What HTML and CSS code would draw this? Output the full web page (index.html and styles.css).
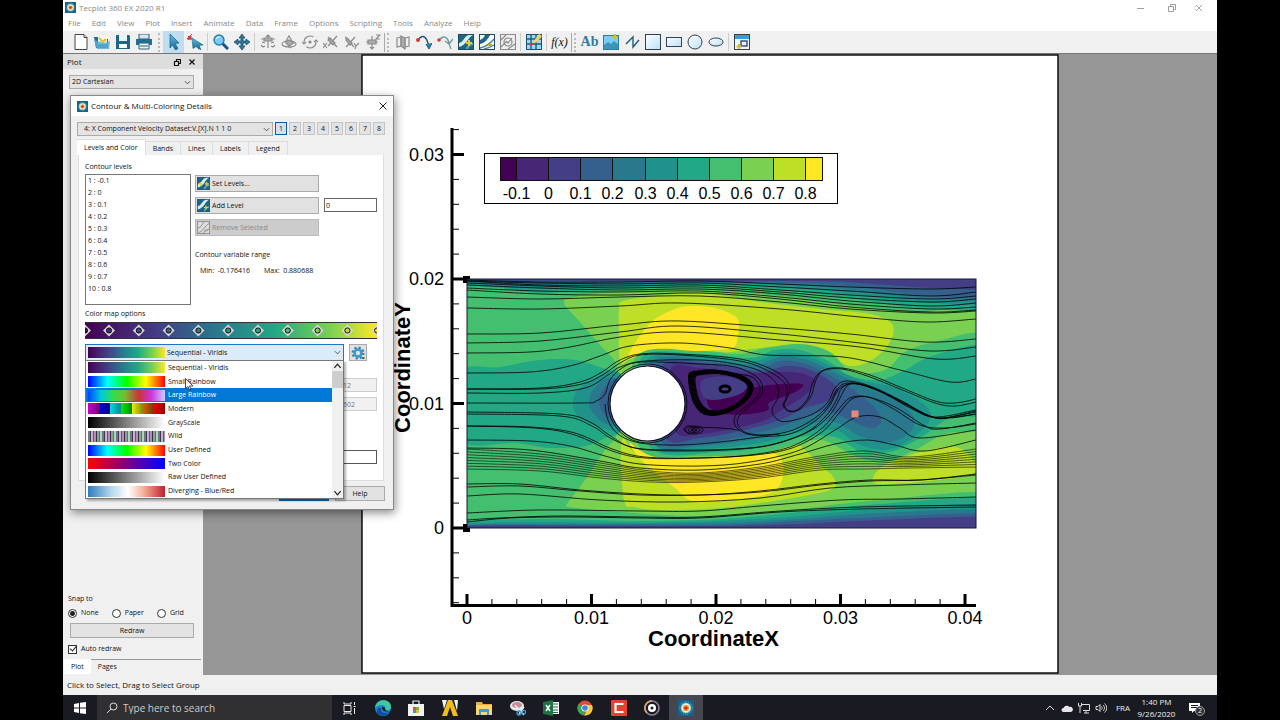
FILE: index.html
```html
<!DOCTYPE html>
<html lang="en">
<head>
<meta charset="utf-8">
<title>Tecplot 360 EX 2020 R1</title>
<link rel="stylesheet" href="styles.css">
</head>
<body>
<svg class="defs" aria-hidden="true">
  <defs>
    <linearGradient id="sky" x1="0" y1="0" x2="1" y2="1"><stop offset="0" stop-color="#fff"/><stop offset="1" stop-color="#b9e0f7"/></linearGradient>
    <linearGradient id="blue" x1="0" y1="0" x2="0" y2="1"><stop offset="0" stop-color="#5cc0ea"/><stop offset="1" stop-color="#17668c"/></linearGradient>
    <symbol id="logo" viewBox="0 0 16 16"><rect width="16" height="16" fill="#17628a"/><circle cx="8" cy="8" r="6.500" fill="none" stroke="#3fb0d6" stroke-dasharray="1 1"/><circle cx="8" cy="8" r="5.400" fill="#7ec8d8"/><circle cx="8" cy="8" r="4.400" fill="#f6efc8"/><circle cx="8" cy="8" r="3" fill="#f08a2c"/><circle cx="8" cy="8" r="1.600" fill="#c42a1c"/></symbol>
    <symbol id="contour" viewBox="0 0 16 16"><rect x=".5" y=".5" width="15" height="15" fill="#1c6684" stroke="#23485c"/><path d="M1 9C6 8 6 2 11 1h4C10 3 9 11 1 13z" fill="#d8eef6"/><path d="M8 15c1-4 4-6 7-6v2c-3 0-4 2-5 4z" fill="#58a9c6"/></symbol>
    <symbol id="contour-light" viewBox="0 0 16 16"><rect x=".5" y=".5" width="15" height="15" fill="#f4fafc" stroke="#23485c"/><path d="M1 6C4 5 5 3 6 1h5C9 5 6 9 1 10z" fill="#1c6684"/><path d="M1 14c5-1 9-3 14-9M5 15c4-1 7-2 10-4" fill="none" stroke="#4a7f96" stroke-width="1.300"/></symbol>
  </defs>
</svg>

<div class="app">
  <header class="titlebar">
    <svg class="logo" viewBox="0 0 16 16"><use href="#logo"/></svg>
    <span class="title">Tecplot 360 EX 2020 R1</span>
    <button class="win" aria-label="Minimize"><svg viewBox="0 0 8 8"><path d="M0 4.500h7"/></svg></button>
    <button class="win" aria-label="Restore"><svg viewBox="0 0 8 8"><path d="M.5 2.500h5v5h-5zM2.500 2.500v-2h5v5h-2"/></svg></button>
    <button class="win" aria-label="Close"><svg viewBox="0 0 8 8"><path d="M1 1l6 6M7 1l-6 6"/></svg></button>
  </header>
  <nav class="menu">
    <button>File</button><button>Edit</button><button>View</button><button>Plot</button><button>Insert</button><button>Animate</button><button>Data</button><button>Frame</button><button>Options</button><button>Scripting</button><button>Tools</button><button>Analyze</button><button>Help</button>
  </nav>
  <div class="toolbar">
    <button aria-label="New"><svg viewBox="0 0 16 16"><path d="M2 .5h9l3 3v12H2z" fill="#fff" stroke="#444"/><path d="M11 .5v3h3" fill="#ddd" stroke="#444"/></svg></button>
    <button aria-label="Open"><svg viewBox="0 0 16 16"><path d="M0 3h6l2 2h6v9H2z" fill="#1c6f94"/><path d="M4 1h9v9H4z" fill="#f6f6ea"/><path d="M5 4l4 4 3-3" stroke="#d7c232" stroke-width="2" fill="none"/><path d="M0 6l3 9h12l1-8-6 2z" fill="#5aaed2" opacity=".85"/></svg></button>
    <button aria-label="Save"><svg viewBox="0 0 16 16"><path d="M1 1h13l1 1v13H1z" fill="#1e6687"/><path d="M4 1h8v6H4z" fill="#e8f4f8"/><path d="M4 10h8v4H4z" fill="#fff"/></svg></button>
    <button aria-label="Print"><svg viewBox="0 0 16 16"><path d="M3 0h10v5H3z" fill="#cfe8f3" stroke="#3b5560"/><path d="M0 5h16v6H0z" fill="#206f93"/><path d="M3 9h10v6H3z" fill="#e9f4f8" stroke="#29627a"/><path d="M4 12h8" stroke="#29627a"/></svg></button>
    <i class="grip"></i>
    <button class="on" aria-label="Select"><svg viewBox="0 0 16 16"><path d="M4 0l9 9-4 .5 3 5-2.500 1.500-3-5L4 14z" fill="url(#blue)" stroke="#15607e" stroke-width=".7"/></svg></button>
    <button aria-label="Adjust"><svg viewBox="0 0 16 16"><path d="M5 4l11 7-4 .5 2 4-3-1-2-2-3 2z" fill="url(#blue)" stroke="#15607e" stroke-width=".6"/><path d="M0 5h5M5 0L0 5" stroke="#b24646" fill="none"/><path d="M1 2h3.500v3.500H1z" fill="#d73a3a"/></svg></button>
    <i class="sep"></i>
    <button aria-label="Zoom"><svg viewBox="0 0 16 16"><path d="M9 9l6 6" stroke="#1c4f86" stroke-width="3"/><circle cx="6" cy="6" r="5" fill="#79cdf4" stroke="#2b7cae" stroke-width="1.400"/><path d="M3 5c1-2 3-2 4-2" stroke="#fff" fill="none"/></svg></button>
    <button aria-label="Translate"><svg viewBox="0 0 16 16"><path d="M8 0l3 4H9v3h3V5l4 3-4 3V9H9v3h2l-3 4-3-4h2V9H4v2L0 8l4-3v2h3V4H5z" fill="#2a7ba4" stroke="#153f58" stroke-width=".7"/></svg></button>
    <i class="sep"></i>
    <button aria-label="Rotate rollerball"><svg class="off" viewBox="0 0 16 16"><path d="M8 1v13M1 5h14M2 8l3 1M11 9l3-1M1 11l2 2 2-1M15 11l-2 2-2-1M6 3l2-2 2 2"/><path d="M4 4h8v3H4z" fill="#aaa"/></svg></button>
    <button aria-label="Rotate spherical"><svg class="off" viewBox="0 0 16 16"><path d="M5 7l3-5 3 5"/><ellipse cx="8" cy="10" rx="7" ry="3"/><path d="M4 8l4-2 5 3-5 3z" fill="#aaa"/><path d="M7 12l3 2"/></svg></button>
    <button aria-label="Rotate twist"><svg class="off" viewBox="0 0 16 16"><circle cx="8" cy="8" r="6" stroke-dasharray="13 5"/><circle cx="8" cy="8" r="1" fill="#777"/><path d="M0 8l2 2 2-2M12 8l2-2 2 2"/></svg></button>
    <button aria-label="Rotate X"><svg class="off" viewBox="0 0 16 16"><path d="M0 9l4 5M4 9l-4 5M5 3l9 10M5 12l9-10M7 5l4 4"/><path d="M7 4l5 5-2 2-5-5z" fill="#aaa"/></svg></button>
    <button aria-label="Rotate Y"><svg class="off" viewBox="0 0 16 16"><path d="M1 3l9 10M2 13l9-10M10 9l2 3 3-3M12 12l-1 3"/><path d="M3 4l5 5-2 2-4-5z" fill="#aaa"/></svg></button>
    <button aria-label="Rotate Z"><svg class="off" viewBox="0 0 16 16"><path d="M7 2v13M1 8h12M11 1h4l-4 4h4M5 13l2 2 2-2"/><path d="M3 6h8v4H3z" fill="#aaa"/></svg></button>
    <i class="grip solid"></i>
    <button aria-label="Slice"><svg class="off" viewBox="0 0 16 16"><path d="M2 4l4-1v9l-4 1zM10 4l4-1v9l-4 1z"/><path d="M6 2l4 2v11l-4-3z" fill="#aaa"/></svg></button>
    <button aria-label="Streamtrace"><svg viewBox="0 0 16 16"><path d="M2 6C7-1 11 3 13 13" fill="none" stroke="#20546c" stroke-width="1.400"/><path d="M10 10l3 5 3-6" fill="#2b88ad" stroke="#1b5670"/><circle cx="2" cy="6" r="2" fill="#d73838"/></svg></button>
    <button aria-label="Streamtrace line"><svg viewBox="0 0 16 16"><path d="M2 6C7 0 11 4 12 9M8 7l4 3 4-5M12 10l2 5" fill="none" stroke="#6f9a9c" stroke-width="1.300"/><circle cx="2" cy="6" r="1.800" fill="#d73838"/></svg></button>
    <button aria-label="Add contour"><svg viewBox="0 0 16 16"><use href="#contour"/><path d="M11 6v6M8 9h6" stroke="#e3cf3a" stroke-width="2"/></svg></button>
    <button aria-label="Remove contour"><svg viewBox="0 0 16 16"><use href="#contour-light"/><path d="M9 11h4" stroke="#c3ad22" stroke-width="2"/></svg></button>
    <button aria-label="Contour label"><svg class="off" viewBox="0 0 16 16"><path d="M.5.5h15v15H.5zM1 6l5-5M1 13l5-5M8 15l7-5"/><circle cx="8" cy="8" r="4"/><path d="M6 7l2 2 4-5"/></svg></button>
    <i class="sep"></i>
    <button aria-label="Probe"><svg viewBox="0 0 16 16"><rect x=".5" y=".5" width="15" height="15" fill="#9fd6f0" stroke="#195470"/><path d="M1 5h14M1 10h14M5 1v14M10 1v14" stroke="#1a5f85" stroke-width="1.400"/><path d="M7 8l6-8 3 2-6 7z" fill="#e9d957"/><path d="M4 10h3" stroke="#d33" stroke-width="2"/></svg></button>
    <i class="sep"></i>
    <button class="fx" aria-label="Function">f(x)</button>
    <i class="grip solid"></i>
    <button class="ab" aria-label="Text">Ab</button>
    <button aria-label="Image"><svg viewBox="0 0 16 16"><rect x=".5" y="1.500" width="15" height="14" fill="#79cdf0" stroke="#2c7ca0"/><path d="M1 11l4-3 3 2 3-3 4 3v5H1z" fill="#3b95bd"/><path d="M12 0v6M9 3h6" stroke="#d7bd35" stroke-width="2"/></svg></button>
    <button aria-label="Polyline"><svg viewBox="0 0 16 16"><path d="M2 10l7-7v10l6-7" fill="none" stroke="#1d5d82" stroke-width="1.400"/></svg></button>
    <button aria-label="Square"><svg viewBox="0 0 16 16"><rect x=".5" y=".5" width="15" height="15" fill="url(#sky)" stroke="#333f4e"/></svg></button>
    <button aria-label="Rectangle"><svg viewBox="0 0 16 16"><rect x=".5" y="3.500" width="15" height="9" fill="url(#sky)" stroke="#333f66"/></svg></button>
    <button aria-label="Circle"><svg viewBox="0 0 16 16"><circle cx="8" cy="8" r="7" fill="url(#sky)" stroke="#333f4e"/></svg></button>
    <button aria-label="Ellipse"><svg viewBox="0 0 16 16"><ellipse cx="8" cy="8" rx="7" ry="4" fill="url(#sky)" stroke="#333f4e"/></svg></button>
    <i class="sep"></i>
    <button aria-label="New frame"><svg viewBox="0 0 16 16"><rect x=".5" y=".5" width="15" height="15" fill="#f3f3f3" stroke="#36424a"/><path d="M1 1h14v4H1z" fill="#3d9ccc"/><rect x="7" y="7" width="6" height="5" fill="#eef" stroke="#223c72" stroke-width="1.300"/><path d="M5 10v5M2.500 12.500h5" stroke="#d7bd35" stroke-width="2"/></svg></button>
  </div>

  <main class="main">
    <aside class="sidebar">
      <div class="dock-title"><span>Plot</span>
        <button aria-label="Float"><svg viewBox="0 0 8 8"><path d="M1.500 3.500h4v4h-4zM3.500 3.500v-2h4v4h-2"/></svg></button>
        <button aria-label="Close panel"><svg viewBox="0 0 8 8"><path d="M1.500 1.500l5 5M6.500 1.500l-5 5"/></svg></button>
      </div>
      <select class="plot-type" aria-label="Plot type"><option>2D Cartesian</option></select>
      <fieldset class="snap">
        <legend>Snap to</legend>
        <label><input type="radio" name="snap" checked>None</label>
        <label><input type="radio" name="snap">Paper</label>
        <label><input type="radio" name="snap">Grid</label>
      </fieldset>
      <button class="redraw">Redraw</button>
      <label class="auto"><input type="checkbox" checked>Auto redraw</label>
      <div class="side-tabs"><button class="on">Plot</button><button>Pages</button></div>
    </aside>
    <section class="workspace">
      <svg class="page" viewBox="361 54 698 621" role="img" aria-label="Velocity contour plot with streamlines">
        <rect x="362" y="55" width="696" height="618" fill="#fff" stroke="#000" stroke-width="1.400"/>
        <clipPath id="field"><rect x="467" y="279" width="509" height="249"/></clipPath>
        <g id="contours" clip-path="url(#field)"></g>
        <g id="streams" clip-path="url(#field)" fill="none" stroke="#000" stroke-width=".8"></g>
        <circle cx="647.500" cy="403.500" r="37.500" fill="#fff" stroke="#0c1030" stroke-width="1.200"/>
        <rect x="467" y="279" width="509" height="249" fill="none" stroke="#14183c"/>
        <path d="M463 276h7v3h-3v4h-4zM463 524h4v4h3v4h-7z"/>
        <rect x="851.500" y="410.500" width="7" height="7" fill="#e8877a"/>
        <rect x="484.500" y="153.500" width="353" height="50" fill="#fff" stroke="#000"/>
        <g id="legend"></g>
        <g id="axes" stroke="#000"></g>
        <g id="labels" class="tick"></g>
        <text class="axis" x="713.500" y="646" text-anchor="middle">CoordinateX</text>
        <text class="axis" x="410" y="367.500" text-anchor="middle" transform="rotate(-90 410 367.500)">CoordinateY</text>
      </svg>
    </section>
  </main>
  <div class="status">Click to Select, Drag to Select Group</div>

  <footer class="taskbar">
    <button class="start" aria-label="Start"><svg viewBox="0 0 12 12"><path d="M0 2l5-1v4.500H0zM6 .8L12 0v5.500H6zM0 6.500h5V11l-5-1zM6 6.500h6V12l-6-.8z" fill="#fff"/></svg></button>
    <label class="search"><svg viewBox="0 0 12 12"><circle cx="7.500" cy="4.500" r="3.500"/><path d="M5 7l-4 4"/></svg><input type="text" placeholder="Type here to search" aria-label="Search"></label>
    <div class="apps">
      <button aria-label="Task view"><svg viewBox="0 0 16 16"><path d="M3 5.500h7v6H3zM3 2v2h7V2M3 15v-2h7v2M13.500 2v3M13.500 8v6" fill="none" stroke="#e8e8e8"/><path d="M12.500 6h2v1h-2z" fill="#fff"/></svg></button>
      <button aria-label="Edge"><svg viewBox="0 0 16 16"><circle cx="8" cy="8" r="8" fill="#1b7fd4"/><path d="M0 8C1-2 16-2 16 7c0 4-5 4-6 2 2-4-5-6-10-1z" fill="#3dc9a0"/><path d="M6 8c-1 5 4 6 8 4-4 6-12 4-12-1 0-2 2-4 4-3z" fill="#0f4f9e"/><path d="M7 7c0 5 5 5 8 4-1 0-4 1-5-2 0-1 0-2-3-2z" fill="#1a1b22"/></svg></button>
      <button aria-label="Store"><svg viewBox="0 0 16 16"><path d="M5 5V1h6v4" fill="none" stroke="#eee" stroke-width="1.200"/><path d="M0 4h16v12H0z" fill="#f2f2f2"/><path d="M5 7h3v3H5z" fill="#e0542c"/><path d="M8 7h3v3H8z" fill="#74b53c"/><path d="M5 10h3v3H5z" fill="#2c9fe0"/><path d="M8 10h3v3H8z" fill="#f2b92c"/></svg></button>
      <button aria-label="Workbench"><svg viewBox="0 0 16 16"><path d="M0 0h5L2 9zM16 0h-4l3 11z" fill="#f4f4f4"/><path d="M6 0h4l6 16h-5L8 7 5 16H0z" fill="#f2bd1b"/></svg></button>
      <button aria-label="File Explorer"><svg viewBox="0 0 16 16"><path d="M0 2h6l1 2h9v11H0z" fill="#e9b13b"/><path d="M0 5h16v10H0z" fill="#f9d674"/><path d="M3 9h10v6h-2v-3H5v3H3z" fill="#3f9cd8"/></svg></button>
      <button aria-label="Snipping Tool"><svg viewBox="0 0 16 16"><ellipse cx="7" cy="6" rx="7" ry="5" fill="#e8e8ee"/><ellipse cx="7" cy="5" rx="5" ry="3" fill="#c68a94"/><path d="M5 5l9 10M14 7l-5 7" stroke="#e8f2fa" stroke-width="1.300"/><circle cx="9" cy="13" r="2" fill="none" stroke="#3f9cd8" stroke-width="1.300"/><circle cx="14" cy="12" r="1.600" fill="none" stroke="#3f9cd8" stroke-width="1.300"/></svg></button>
      <button aria-label="Excel"><svg viewBox="0 0 16 16"><path d="M9 2h7v12H9z" fill="#f5f5f5"/><path d="M10 4h5M10 7h5M10 10h5M10 12.500h5" stroke="#1e7145"/><path d="M0 2l10-2v16L0 14z" fill="#1e7145"/><path d="M3 5l4 6M7 5l-4 6" stroke="#fff" stroke-width="1.400"/></svg></button>
      <button aria-label="Chrome"><svg viewBox="0 0 16 16"><circle cx="8" cy="8" r="7.500" fill="#dd4b3a"/><path d="M1.500 4L8 8l-.5 7.500A7.500 7.500 0 0 1 1.500 4z" fill="#3da355"/><path d="M15 5a7.500 7.500 0 0 1-7.500 10.500L11 8V5z" fill="#f5cb3c"/><circle cx="8" cy="8" r="3.600" fill="#fff"/><circle cx="8" cy="8" r="2.800" fill="#4285d8"/></svg></button>
      <button aria-label="Camtasia"><svg viewBox="0 0 16 16"><rect width="16" height="16" rx="1" fill="#e8402f"/><path d="M12.500 4h-8v8h8" fill="none" stroke="#fff" stroke-width="2.200"/></svg></button>
      <button aria-label="Recorder"><svg viewBox="0 0 16 16"><circle cx="8" cy="8" r="7" fill="none" stroke="#8f7f98" stroke-width="1.600"/><path d="M3 13A7 7 0 0 1 8 1" fill="none" stroke="#e0a27a" stroke-width="1.600"/><circle cx="8" cy="8" r="4" fill="#fff"/><circle cx="8" cy="8" r="1.500" fill="#1a1b22"/></svg></button>
      <button class="on" aria-label="Tecplot"><svg viewBox="0 0 16 16"><use href="#logo"/></svg></button>
    </div>
    <div class="tray">
      <button aria-label="Show hidden icons"><svg viewBox="0 0 12 12"><path d="M2 8l4-4 4 4"/></svg></button>
      <button aria-label="OneDrive"><svg viewBox="0 0 12 12"><path d="M2.500 10a2 2 0 0 1 0-4 3.500 3.500 0 0 1 6-1A2.500 2.500 0 0 1 10 10z" fill="#e6e6ec" stroke="none"/></svg></button>
      <button aria-label="Network"><svg viewBox="0 0 12 12"><path d="M3 2.500h8.500v6H5M6 11h5M8 9v2M.5 1v3h3V1M2 4v7"/></svg></button>
      <button aria-label="Volume"><svg viewBox="0 0 12 12"><path d="M1 4.500h2l2-2v7l-2-2H1zM6.500 4.500c1 1 1 2 0 3M8 3c2 2 2 4 0 6M9.500 1.500c3 3 3 6 0 9"/></svg></button>
      <span class="lang">FRA</span>
      <span class="clock">1:40 PM<br>9/26/2020</span>
      <button class="note" aria-label="2 notifications"><svg viewBox="0 0 12 12"><path d="M0 1h11v8H5l-2 2V9H0z" fill="#fff" stroke="none"/><path d="M2 3.500h7M2 5.500h7" stroke="#1a1b22"/></svg><b>2</b></button>
    </div>
  </footer>

  <section class="dialog" role="dialog" aria-label="Contour and multi-coloring details">
    <header class="dlg-title"><svg class="logo" viewBox="0 0 16 16"><use href="#logo"/></svg><h2>Contour &amp; Multi-Coloring Details</h2><button aria-label="Close dialog"><svg viewBox="0 0 8 8"><path d="M.5.5l7 7M7.500.5l-7 7"/></svg></button></header>
    <div class="var-row">
      <select aria-label="Contour variable"><option>4: X Component Velocity Dataset:V.[X].N 1 1 0</option></select>
      <button class="on">1</button><button>2</button><button>3</button><button>4</button><button>5</button><button>6</button><button>7</button><button>8</button>
    </div>
    <div class="tabs"><button class="on">Levels and Color</button><button>Bands</button><button>Lines</button><button>Labels</button><button>Legend</button></div>
    <div class="panel">
      <div class="levels">
        <div class="level-list">
          <label for="levels">Contour levels</label>
          <select id="levels" multiple size="10"><option>1 : -0.1</option><option>2 : 0</option><option>3 : 0.1</option><option>4 : 0.2</option><option>5 : 0.3</option><option>6 : 0.4</option><option>7 : 0.5</option><option>8 : 0.6</option><option>9 : 0.7</option><option>10 : 0.8</option></select>
        </div>
        <div class="level-tools">
          <button><svg viewBox="0 0 16 16"><use href="#contour"/><path d="M4 6v5M1.500 8.500h5M12 6v5M9.500 8.500h5" stroke="#e3cf3a" stroke-width="1.400"/></svg>Set Levels...</button>
          <div class="add"><button><svg viewBox="0 0 16 16"><use href="#contour"/><path d="M11 8v5M8.500 10.500h5" stroke="#e3cf3a" stroke-width="1.400"/></svg>Add Level</button><input type="text" value="0" aria-label="Level value"></div>
          <button disabled><svg class="off" viewBox="0 0 16 16"><rect x=".5" y=".5" width="15" height="15" fill="#ddd"/><path d="M1 9C6 8 6 3 9 1M2 14c6-1 7-8 13-11M8 15c1-3 4-5 7-5M9 12h4"/></svg>Remove Selected</button>
          <p>Contour variable range</p>
          <p class="range"><span>Min:&nbsp; -0.176416</span><span>Max:&nbsp; 0.880688</span></p>
        </div>
      </div>
      <p class="cm-label">Color map options</p>
      <div class="cm-bar viridis" id="cmbar"></div>
      <div class="cm-row">
        <div class="combo">
          <i class="swatch viridis"></i>
          <select aria-label="Color map"><option>Sequential - Viridis</option></select>
          <div class="drop">
            <ul>
              <li><i class="swatch viridis"></i>Sequential - Viridis</li>
              <li><i class="swatch small-rainbow"></i>Small Rainbow</li>
              <li class="sel"><i class="swatch large-rainbow"></i>Large Rainbow</li>
              <li><i class="swatch modern"></i>Modern</li>
              <li><i class="swatch gray"></i>GrayScale</li>
              <li><i class="swatch wild"></i>Wild</li>
              <li><i class="swatch small-rainbow"></i>User Defined</li>
              <li><i class="swatch two"></i>Two Color</li>
              <li><i class="swatch gray"></i>Raw User Defined</li>
              <li><i class="swatch diverging"></i>Diverging - Blue/Red</li>
            </ul>
            <div class="scroll"><svg viewBox="0 0 8 8"><path d="M1.500 5.500L4 2.500l2.500 3"/></svg><i></i><svg viewBox="0 0 8 8"><path d="M1.500 2.500L4 5.500l2.500-3"/></svg></div>
          </div>
          <svg class="cursor" viewBox="0 0 9 13"><path d="M.5.5v10l2.500-2 1.500 3.500 1.500-.7-1.500-3.300H8z" fill="#fff" stroke="#222" stroke-width=".8"/></svg>
        </div>
        <button class="gear" aria-label="Color map settings"><svg viewBox="0 0 16 16"><circle cx="8" cy="8" r="6" fill="none" stroke="#2d86b5" stroke-width="3" stroke-dasharray="2.400 2.300"/><circle cx="8" cy="8" r="4" fill="none" stroke="#3c9aca" stroke-width="3"/><path d="M12 13h4l-2 2z" fill="#111"/></svg></button>
      </div>
      <div class="values"><input type="text" value="12" disabled aria-label="Minimum"><input type="text" value="602" disabled aria-label="Maximum"><input class="last" type="text" aria-label="Cycles"></div>
    </div>
    <div class="dlg-foot"><button class="primary" aria-label="Close"></button><button>Help</button></div>
  </section>
</div>
<script src="plot.js"></script>
</body>
</html>
```
FILE: styles.css
```css
* { box-sizing: border-box; }
body { margin: 0; background: #000; color: #111; font: 8px/12px "Open Sans", "Noto Sans", sans-serif; }
button, input, select { font: inherit; color: inherit; margin: 0; padding: 0; border: 0; background: none; border-radius: 0; }
svg { display: block; }
p, ul, h2 { margin: 0; padding: 0; }
ul { list-style: none; }
.defs { position: absolute; width: 0; height: 0; }
.app { position: relative; display: flex; flex-direction: column; min-height: 100vh; margin: 0 63px; background: #f0f0f0; }
.titlebar { display: flex; align-items: center; height: 15px; background: #fff; color: #888; padding: 0 6px 0 2px; }
.logo { width: 11px; height: 11px; }
.title { flex: 1; padding-left: 3px; }
.win { width: 31px; display: grid; place-items: center; }
.win:last-child { width: 24px; }
.win svg { width: 8px; height: 8px; fill: none; stroke: #888; stroke-width: .8; }
.menu { display: flex; gap: 11px; height: 16px; padding-left: 5px; background: #fff; color: #888; }
.toolbar { display: flex; align-items: center; height: 23px; border-bottom: 1px solid #777; padding-left: 7px; }
.toolbar button { width: 21px; height: 22px; flex: none; display: grid; place-items: center; }
.toolbar button.on { background: #bfdcf1; }
.toolbar svg { width: 16px; height: 16px; }
.off { fill: none; stroke: #8b8b8b; stroke-width: 1.2; }
.grip { width: 3px; height: 19px; border-right: 2px dotted #bbb; margin: 0 3px 0 3px; }
.grip.solid { width: 5px; margin: 0 3px 0 1px; border-left: 1px solid #aaa; }
.sep { width: 1px; height: 18px; background: #ccc; margin: 0 2px; }
.toolbar .fx { font: italic 12px/16px "Liberation Serif", serif; }
.toolbar .ab { font: bold 14px/16px "Liberation Serif", serif; color: #2c7ba0; }
.main { display: flex; flex: 1; }
.sidebar { width: 140px; display: flex; flex-direction: column; flex: none; font-size: 7px; }
.dock-title { display: flex; gap: 7px; align-items: center; height: 15px; background: #ddd; padding: 0 7px 0 4px; }
.dock-title span { flex: 1; font-size: 8px; }
.dock-title svg { width: 8px; height: 8px; fill: none; stroke: #111; stroke-width: 1.2; }
.plot-type, .var-row select, .combo select { appearance: none; border: 1px solid #aaa; background: #e3e3e3 url("data:image/svg+xml,%3Csvg xmlns='http://www.w3.org/2000/svg' viewBox='0 0 8 8'%3E%3Cpath d='M1 2.500l3 3 3-3' fill='none' stroke='%23444'/%3E%3C/svg%3E") no-repeat right 2px center / 7px; }
.plot-type { margin: 6px 9px 0 6px; height: 14px; padding-left: 2px; }
.snap { border: 0; margin: auto 0 0 5px; padding: 0; display: flex; gap: 13px; }
.snap legend { padding: 0; margin-bottom: 2px; }
.snap label, .auto { display: flex; align-items: center; gap: 4px; }
input[type=radio], input[type=checkbox] { appearance: none; width: 9px; height: 9px; border: 1px solid #333; background: #fff; display: grid; place-items: center; }
input[type=radio] { border-radius: 50%; }
input[type=radio]:checked { background: radial-gradient(#222 0 2px, #fff 3px); }
input[type=checkbox]:checked::after { content: ""; width: 3px; height: 5px; border: solid #222; border-width: 0 1px 1px 0; transform: rotate(40deg); margin-top: -2px; }
.redraw { height: 15px; margin: 4px 9px 5px 7px; border: 1px solid #aaa; background: #e3e3e3; }
.auto { margin-left: 5px; }
.side-tabs { display: flex; margin: 4px 2px 1px 1px; height: 15px; }
.side-tabs button { padding: 0 7px; border-top: 1px solid #999; }
.side-tabs button.on { background: #fff; border-top-color: #fff; }
.side-tabs button:last-child { flex: 1; text-align: left; }
.workspace { flex: 1; background: #969696; display: flex; justify-content: center; }
.page { height: calc(100vh - 99px); }
.tick { font: 18px "Liberation Sans", sans-serif; }
.tick .key { font-size: 16px; }
.axis { font: bold 22px "Liberation Sans", sans-serif; }
.status { height: 20px; padding: 4px; }
.taskbar { display: flex; height: 25px; background: #1a1b22; color: #eee; }
.start { width: 34px; display: grid; place-items: center; }
.start svg { width: 12px; height: 12px; }
.search { width: 235px; display: flex; align-items: center; gap: 5px; background: #303032; padding-left: 9px; }
.search svg { width: 12px; height: 12px; fill: none; stroke: #ddd; }
.search input { font-size: 10px; width: 180px; }
.search input::placeholder { color: #ccc; opacity: 1; }
.apps { display: flex; width: 371px; }
.apps button { flex: 1; display: grid; place-items: center; }
.apps button.on { background: #45464f; }
.apps svg { width: 16px; height: 16px; }
.tray { margin-left: auto; display: flex; align-items: center; gap: 5px; padding-right: 12px; }
.tray svg { width: 12px; height: 12px; fill: none; stroke: #ddd; }
.lang { padding-left: 4px; }
.clock { text-align: center; width: 43px; }
.note { position: relative; width: 22px; padding-left: 6px; }
.note b { position: absolute; left: 12px; top: 4px; width: 10px; height: 10px; border-radius: 50%; border: 1px solid #999; background: #333; font: 7px/8px "Open Sans", sans-serif; }
.dialog { position: absolute; left: 7px; top: 95px; width: 324px; background: #f0f0f0; border: 1px solid #888; box-shadow: 1px 3px 9px rgba(0,0,0,.45); font-size: 7px; }
.dlg-title { display: flex; align-items: center; height: 20px; background: #fff; padding: 0 6px; }
.dlg-title h2 { flex: 1; font: 8px/12px "Open Sans", sans-serif; padding-left: 3px; }
.dlg-title svg:not(.logo) { width: 8px; height: 8px; stroke: #222; fill: none; }
.var-row { display: flex; gap: 2px; padding: 6px 8px 0 6px; }
.var-row select { flex: 1; height: 14px; padding-left: 6px; }
.var-row button { width: 12px; height: 13px; border: 1px solid #c4c4c4; background: #e3e3e3; }
.var-row button.on { background: #cce4f7; border-color: #0a5ca8; }
.tabs { display: flex; height: 16px; margin: 3px 8px 0 6px; align-items: end; }
.tabs button { height: 14px; padding: 0 7px; border: 1px solid #ddd; border-left: 0; border-bottom: 0; }
.tabs button.on { background: #fff; height: 16px; }
.panel { margin: 0 9px 0 7px; padding: 6px 6px 0; height: 326px; background: #fff; border: 1px solid #ddd; border-top: 0; }
.levels { display: flex; gap: 4px; }
.level-list { width: 106px; }
.level-list label { display: block; }
.level-list select { display: block; width: 106px; height: 131px; margin-top: 1px; border: 1px solid #777; overflow: hidden; padding: 1px 0; scrollbar-width: none; background: #fff; }
.level-list option { height: 12px; min-height: 0; line-height: 12px; padding: 0 2px; }
.level-tools { flex: 1; padding-top: 14px; display: flex; flex-direction: column; }
.level-tools button { width: 124px; height: 17px; margin-bottom: 5px; border: 1px solid #aaa; background: #e1e1e1; display: flex; align-items: center; gap: 2px; padding-left: 1px; }
.level-tools button:disabled { background: #ccc; color: #888; border-color: #bbb; }
.level-tools svg { width: 13px; height: 13px; }
.add { display: flex; gap: 5px; }
.add input { width: 53px; height: 14px; margin-top: 1px; border: 1px solid #666; background: #fff; padding-left: 1px; }
.level-tools p { margin-top: 8px; }
.level-tools .range { display: flex; gap: 14px; margin: 4px 0 0 5px; }
.cm-label { margin: 3px 0 2px; }
.cm-bar { height: 17px; border: solid #333; border-width: 1px 0; overflow: hidden; }
.cm-bar svg { width: 100%; height: 15px; }
.viridis { background: linear-gradient(90deg, #440154, #433e85 25%, #2a788e 45%, #22a884 65%, #7ad151 84%, #fde725); }
.cm-row { display: flex; gap: 5px; margin-top: 5px; align-items: center; }
.combo { position: relative; width: 259px; }
.combo select { display: block; width: 100%; height: 17px; padding-left: 81px; border-color: #1a76c4; background-color: #dcebf9; }
.combo > .swatch { position: absolute; left: 3px; top: 3px; }
.swatch { width: 77px; height: 11px; flex: none; }
.drop { position: absolute; left: 0; right: 0; top: 16px; display: flex; background: #fff; border: 1px solid #777; box-shadow: 2px 2px 2px rgba(0,0,0,.3); }
.drop ul { flex: 1; height: 137px; display: grid; grid-template-rows: repeat(10, 1fr); }
.drop li { display: flex; align-items: center; gap: 3px; padding-left: 2px; }
.drop li.sel { background: #0078d7; color: #fff; }
.scroll { width: 11px; background: #f0f0f0; display: flex; flex-direction: column; }
.scroll svg { width: 11px; height: 10px; fill: none; stroke: #222; }
.scroll i { height: 17px; background: #cdcdcd; }
.scroll svg:last-child { margin-top: auto; }
.small-rainbow { background: linear-gradient(90deg, #00f, #0ff 25%, #0f0 50%, #ff0 75%, #f00); }
.large-rainbow { background: linear-gradient(90deg, #04f, #0cd 17%, #3d4 34%, #7b3 48%, #c33 66%, #c3d 82%, #ccf); }
.modern { background: linear-gradient(90deg, #c0c, #707 14%, #00e 14%, #008 28%, #0dd 28%, #088 43%, #0e0 43%, #080 57%, #ee0 57%, #880 71%, #d60 71%, #730 86%, #e00 86%, #900); }
.gray { background: linear-gradient(90deg, #000, #fff); }
.wild { background: repeating-linear-gradient(90deg, #777 0 2px, #436 2px 3px, #bbb 3px 5px, #375 5px 6px, #b8b 6px 8px, #334 8px 9px, #999 9px 11px, #a55 11px 12px, #9db 12px 14px); }
.two { background: linear-gradient(90deg, #f00, #00f); }
.diverging { background: linear-gradient(90deg, #2f7cbf, #b5d7ea 30%, #fff 52%, #f4b098 72%, #c02030); }
.cursor { position: absolute; left: 100px; top: 34px; width: 9px; height: 13px; }
.gear { width: 18px; height: 17px; border: 1px solid #aaa; background: #e1e1e1; display: grid; place-items: center; }
.gear svg { width: 14px; height: 14px; }
.values { display: flex; flex-direction: column; align-items: end; gap: 5px; margin-top: 17px; }
.values input { width: 50px; height: 14px; border: 1px solid #ccc; padding-left: 15px; background: #f0f0f0; color: #777; }
.values .last { margin-top: 34px; background: #fff; border-color: #555; }
.dlg-foot { display: flex; justify-content: end; gap: 6px; padding: 5px 8px 8px; }
.dlg-foot button { width: 50px; height: 15px; border: 1px solid #aaa; background: #e1e1e1; }
.dlg-foot .primary { border: 2px solid #0a68b8; }
```
FILE: plot.js
```js
const NS = "http://www.w3.org/2000/svg";
const byId = id => document.getElementById(id);
function add(parent, tag, attrs, text) {
  const el = document.createElementNS(NS, tag);
  for (const k in attrs) el.setAttribute(k, attrs[k]);
  if (text !== undefined) el.textContent = text;
  parent.appendChild(el);
  return el;
}
const parse = s => s.trim().split(/\s+/).map(p => p.split(",").map(Number));

// Catmull-Rom spline through the points
function spline(p, closed) {
  const n = p.length;
  const at = i => closed ? p[(i + n) % n] : p[Math.max(0, Math.min(n - 1, i))];
  let d = `M${p[0]}`;
  for (let i = 0; i < (closed ? n : n - 1); i++) {
    const [a, b, c, e] = [at(i - 1), at(i), at(i + 1), at(i + 2)];
    d += `C${b[0] + (c[0] - a[0]) / 6},${b[1] + (c[1] - a[1]) / 6} ${c[0] - (e[0] - b[0]) / 6},${c[1] - (e[1] - b[1]) / 6} ${c}`;
  }
  return closed ? d + "Z" : d;
}

const V = ["#440154", "#472677", "#433e85", "#355f8d", "#2a788e", "#21918c", "#22a884", "#44bf70", "#7ad151", "#bddf26", "#fde725"];
const con = byId("contours"), str = byId("streams");
add(con, "rect", { x: 467, y: 279, width: 509, height: 249, fill: V[7] });
const regions = [
  [8, "564,303 575,297 620,292 700,290 780,296 850,306 920,313 990,314 990,498 900,503 800,510 700,516 620,512 570,507 568,503 585,480 605,450 618,430 618,370 600,345 580,322"],
  [9, "619,308 621,302 640,298 700,293 760,302 820,309 870,314 892,324 890,342 872,360 850,366 830,356 800,346 760,348 720,353 640,357 622,364 619,350"],
  [10, "630,357 634,345 642,333 655,319 675,309 690,306 715,308 737,318 738,335 732,348 700,351 660,354"],
  [9, "622,440 640,455 700,458 760,450 790,442 805,450 820,465 834,478 830,490 780,500 720,508 660,510 635,507 624,500"],
  [10, "630,443 650,455 700,458 750,452 775,454 783,465 780,485 765,495 720,501 692,501 675,488 650,468 636,454"],
  [9, "873,478 885,465 920,452 955,447 973,460 972,474 920,482 880,484"],
  [7, "635,358 700,351 740,354 765,348 800,344 830,352 852,372 885,370 905,352 935,342 990,338 990,422 945,434 915,450 885,462 855,456 822,440 790,446 760,454 700,456 640,448"],
  [6, "640,360 700,354 750,358 775,350 800,350 828,361 850,376 880,380 905,370 935,355 990,348 990,410 950,418 920,438 890,452 860,451 835,437 800,437 770,446 720,452 650,447"],
  [5, "645,362 710,357 750,362 780,353 805,355 830,366 860,380 895,388 925,405 930,420 910,440 885,450 858,444 835,430 800,432 760,443 700,449 655,445"],
  [4, "650,364 710,360 755,365 780,357 805,359 830,370 860,385 895,400 914,418 908,434 885,443 858,435 835,422 810,424 790,430 750,440 700,446 655,443"],
  [3, "655,366 710,362 757,369 780,361 803,363 828,374 855,391 875,408 881,422 870,428 850,420 830,412 812,414 785,425 745,436 700,443 660,440"],
  [2, "660,368 710,364 760,372 785,366 808,369 830,381 838,392 825,402 805,408 780,420 740,431 700,438 665,437"],
  [1, "670,370 700,368 740,373 775,372 800,373 815,381 805,395 785,408 765,420 735,428 700,434 675,430"],
  [0, "710,396 740,390 770,385 802,384 795,392 770,402 768,410 750,414 725,414 710,408"],
  [2, "701,382 712,377 730,377 746,385 740,394 715,400 703,396"],
  [6, "460,373 500,367 540,360 575,360 605,369 622,378 622,428 605,438 585,446 550,448 515,443 460,440"],
  [5, "573,403 577,391 595,378 612,372 622,380 622,428 610,430 592,424 577,415"],
  [4, "589,403 593,390 608,378 622,385 622,422 606,424 594,414"],
  [3, "599,403 603,390 618,380 620,422 606,416"],
  [6, "450,270 1000,270 1000,307 930,309 860,300 800,292 720,286 620,289 540,293 500,288 450,284"],
  [5, "450,270 1000,270 1000,302 930,303 860,295 800,288 720,283 600,286 530,289 450,282"],
  [4, "450,270 1000,270 1000,298 930,299 860,291 800,285 720,283 600,284 520,285 450,281"],
  [3, "450,270 1000,270 1000,295 930,296 860,287 800,283 720,282 600,282 450,280"],
  [2, "450,270 1000,270 1000,288 930,288 860,283 800,281 600,281 450,279"],
  [7, "450,540 450,521 540,516 640,519 720,517 800,509 880,500 1000,494 1000,540"],
  [6, "450,540 450,523 540,519 640,521 720,519 800,512 880,504 1000,500 1000,540"],
  [5, "450,540 450,525 540,522 640,523 720,521 800,516 880,509 1000,506 1000,540"],
  [4, "450,540 450,526 600,524 720,523 800,519 880,513 1000,511 1000,540"],
  [3, "450,540 450,526 600,525 720,525 800,521 880,517 1000,515 1000,540"],
  [2, "450,540 450,527 600,526 720,526 800,524 880,520 1000,518 1000,540"]
];
for (const [level, pts] of regions) add(con, "path", { d: spline(parse(pts), true), fill: V[level] });

const lines = [
  "467,280 540,282 620,282 700,281 780,284 850,287 930,289 976,287",
  "467,281 540,283 620,284 700,283 780,287 850,291 930,296 976,292",
  "467,281 540,285 620,286 700,285 780,290 850,295 930,299 976,296",
  "467,283 540,286 620,288 700,287 780,292 850,298 930,302 976,299",
  "467,285 540,288 620,290 700,289 780,294 850,301 930,306 976,303",
  "467,288 540,291 620,292 700,291 780,297 850,304 930,309 976,307",
  "467,290 540,294 620,295 700,293 780,299 850,307 930,312 976,310",
  "467,297 540,299 620,297 700,296 780,302 850,309 930,313 976,311",
  "467,308 540,309 620,306 680,303 780,309 860,317 925,322 976,319",
  "467,334 540,333 620,325 680,321 780,328 850,334 925,342 976,339",
  "467,343 540,341 620,332 680,326 780,334 860,343 930,351 976,347",
  "467,353 530,352 570,347 620,337 680,332 780,340 860,347 935,359 976,356",
  "467,373 530,372 570,366 600,356 630,346 680,343 730,348 767,355 843,357 900,370 950,382 976,379",
  "467,389 540,388 580,382 602,372 618,361 640,354 680,354 740,359 775,371 789,384 788,396 784,405 790,411 800,409 811,396 816,380 824,370 842,368 870,375 900,387 935,401 955,403 976,399",
  "467,389 540,389 582,384 604,374 620,363 640,355 680,355 740,361 770,372 786,385 786,398 783,405 788,411 797,410 808,398 813,382 822,371 842,369 870,377 900,389 935,403 955,406 976,402",
  "467,393 540,393 585,388 608,375 620,367 645,361 700,360 735,364 760,371 776,383 778,397 772,410 778,420 790,421 813,414 828,402 835,388 846,381 870,386 900,400 930,416 950,418 976,414",
  "467,403 580,403 596,401 605,394 610,380 622,368 642,362 700,364 735,367 758,378 762,393 750,406 739,416 738,425 747,433 768,435 793,430 815,418 829,404 838,388 850,383 875,389 905,404 930,416 945,418 976,411",
  "467,412 560,414 590,422 612,437 635,448 680,450 735,449 770,445 805,433 825,417 836,401 842,388 855,383 880,391 910,407 935,418 950,417 976,412",
  "467,414 560,416 592,426 612,439 640,449 690,451 740,449 775,444 808,432 829,416 840,398 847,386 858,384 885,394 912,409 938,418 976,414",
  "605,404 608,420 618,434 640,443 680,445 720,442 760,437 790,434 815,421 830,405 838,390 850,384 870,387 905,403 932,417 976,410",
  "730,374 752,377 760,390 752,402 736,415 736,427 752,435 780,434",
  "467,426 530,427 575,433 612,449 645,457 700,458 750,455 790,447 820,430 838,410 850,398 868,397 895,407 925,426 940,429 976,423",
  "467,426 535,428 575,435 612,451 645,458 700,458 755,455 792,448 822,432 840,412 852,399 868,397 892,408 920,425 945,428 976,424",
  "467,440 530,441 570,446 605,456 640,464 700,466 750,462 800,450 835,430 857,417 880,417 900,428 920,438 976,430",
  "467,448 530,450 600,461 640,468 700,470 760,464 800,454 835,444 867,440 895,445 925,451 976,440",
  "467,484 520,484 580,490 640,494 700,495 760,491 820,484 870,480 920,480 976,474",
  "467,487 520,486 580,491 640,495 700,495 760,492 820,485 870,481 920,480 976,475",
  "467,496 520,494 600,500 680,502 760,498 830,488 900,485 976,483",
  "467,513 540,510 640,511 700,511 760,506 840,500 900,499 976,497",
  "467,520 500,518 560,516 640,517 700,517 780,511 860,507 976,505",
  "467,522 510,518 570,517 640,518 700,518 780,512 860,509 976,507",
  "690,434 684,430 687,426 696,427 720,428 740,430"
];
for (const s of lines) add(str, "path", { d: spline(parse(s)) });

// Lower bundle, evenly spaced between its two outer curves
const hi = parse("467,449 540,454 600,463 650,471 700,473 760,467 820,456 865,451 910,457 976,449");
const lo = parse("467,469 540,471 600,478 650,482 700,482 760,478 820,470 865,469 910,468 976,467");
for (let k = 0; k <= 7; k++) add(str, "path", { d: spline(hi.map((p, i) => [p[0], p[1] + (lo[i][1] - p[1]) * k / 7])), "stroke-width": .6 });

// Vortices
const ring = parse("689,374 698,371 716,370 737,374 749,380 753,388 747,400 733,410 718,415 704,414 695,405 690,390");
for (let k = 0; k < 8; k++) {
  const f = 1 - k * .025;
  add(str, "path", { d: spline(ring.map(([x, y]) => [725 + (x - 725) * f, 390 + (y - 390) * f]), true), "stroke-width": 1.1 });
}
for (const [cx, cy, rx, ry, w] of [[725, 389, 5, 3, 3], [694, 430, 9, 4, .8], [694, 430, 6, 2.5, .8], [694, 430, 3, 1, 1]])
  add(str, "ellipse", { cx, cy, rx, ry, "stroke-width": w });
add(str, "circle", { cx: 647.5, cy: 403.5, r: 39.5 });

// Legend and axes
const lab = byId("labels"), leg = byId("legend"), ax = byId("axes");
const edges = [500, 516, 548, 580, 612, 645, 677, 709, 741, 773, 805, 822];
V.forEach((c, i) => add(leg, "rect", { x: edges[i] + .5, y: 157.5, width: edges[i + 1] - edges[i], height: 23, fill: c, stroke: "#111" }));
["-0.1", "0", "0.1", "0.2", "0.3", "0.4", "0.5", "0.6", "0.7", "0.8"].forEach((t, i) =>
  add(lab, "text", { class: "key", x: edges[i + 1] + .5, y: 199, "text-anchor": "middle" }, t));
add(ax, "path", { d: "M452 128V605.500H976", fill: "none", "stroke-width": 3 });
for (let i = -3; i <= 16; i++) {
  const y = 528 - i * 24.9, major = i % 5 === 0;
  add(ax, "path", { d: `M453 ${y}h${major ? 11 : 6}`, "stroke-width": major ? 3 : 1 });
  if (major) add(lab, "text", { x: 444, y: y + 6, "text-anchor": "end" }, i ? (i / 500).toFixed(2) : "0");
}
for (let i = 0; i <= 20; i++) {
  const x = 467 + i * 24.9, major = i % 5 === 0;
  add(ax, "path", { d: `M${x} 605v${major ? -11 : -6}`, "stroke-width": major ? 3 : 1 });
  if (major) add(lab, "text", { x, y: 624, "text-anchor": "middle" }, i ? (i / 500).toFixed(2) : "0");
}

// Control points on the colour map bar
const bar = add(byId("cmbar"), "svg", { viewBox: "0 0 292 15" });
for (let i = 0; i <= 10; i++) {
  const x = i ? 24 + (i - 1) * 29.8 : 0;
  add(bar, "path", { d: `M${x} 1.500l6 6-6 6-6-6z`, fill: "#d5d5d5" });
  add(bar, "circle", { cx: x, cy: 7.5, r: 2.6, fill: V[Math.min(10, i)], stroke: "#111" });
}
```
